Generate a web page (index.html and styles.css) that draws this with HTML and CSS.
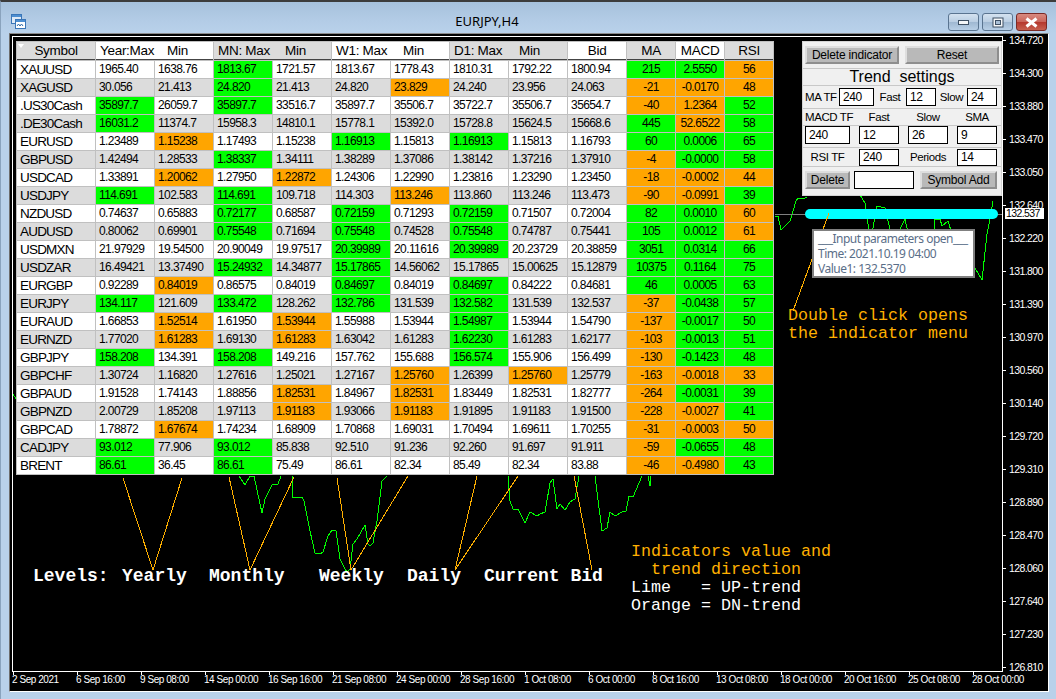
FILE: index.html
```html
<!DOCTYPE html>
<html lang="en">
<head>
<meta charset="utf-8">
<title>EURJPY,H4</title>
<link rel="stylesheet" href="styles.css">
</head>
<body>
<div class="window">
  <header class="titlebar">
    <svg class="appicon" width="15" height="15" viewBox="0 0 15 15"><rect x="0.5" y="0.5" width="10" height="9" fill="#dfeaf6" stroke="#3a76b8"/><rect x="1" y="1" width="9" height="2" fill="#4d8ed0"/><rect x="4.5" y="5.5" width="10" height="9" fill="#fff" stroke="#3a76b8"/><rect x="5" y="6" width="9" height="2" fill="#4d8ed0"/><path d="M6 12l1.5-2 1.5 2 1.5-2 1.5 2" fill="none" stroke="#2f6aa8"/></svg>
    <div class="title">EURJPY,H4</div>
    <div class="winbtns">
      <div class="winbtn"><svg width="12" height="7" viewBox="0 0 12 7"><rect x="0.5" y="1.5" width="10" height="4" fill="#f4f6f8" stroke="#3e5064"/></svg></div>
      <div class="winbtn"><svg width="12" height="11" viewBox="0 0 12 11"><rect x="1" y="1" width="10" height="9" fill="#f4f6f8" stroke="#3e5064"/><rect x="3.5" y="3.5" width="5" height="4" fill="#a9bfd6" stroke="#3e5064"/></svg></div>
      <div class="winbtn close"><svg width="15" height="11" viewBox="0 0 15 11"><path d="M2.5 1.5l10 8M12.5 1.5l-10 8" stroke="#fff" stroke-width="3"/></svg></div>
    </div>
  </header>
  <main class="chart">
    <div class="chart-body">
      <div class="plot">
        <svg class="lines" width="989" height="634" viewBox="13 36 989 634">
          <g class="green">
            <polyline points="13,393 16,398"/>
            <polyline points="239,475 245,484 250,475 254,475 262,512 265,498 272,484 278,483 281,475"/>
            <polyline points="292,475 293,497 302,496 304,500 310,530 315,552 320,553 323,551 328,535 332,529 336,530 340,558 345,568 347,571 350,568 353,543 357,538 365,524 368,543 370,545 373,542 377,520 382,480 387,475"/>
            <polyline points="508,475 510,500 513,508 518,508 525,522 530,511 537,515 540,513 545,511 550,482 553,478 557,508 560,503 565,509 570,501 575,498 579,475"/>
            <polyline points="595,475 602,530 607,527 610,511 615,515 622,511 626,510 629,495 633,496 642,475"/>
            <polyline points="648,475 650,485 651,475"/>
            <polyline points="775,215 778,215 781,229 790,220 796,200 798,197 803,198 807,196"/>
            <polyline points="860,194 865,202 868,223 870,233 873,227 877,205 885,207 890,228 900,228 905,218 908,232 933,240 935,218 940,218 942,225 948,220 952,233 975,267 982,279 987,233 990,218 993,200"/>
          </g>
          <line class="priceline" x1="775" y1="213" x2="1002" y2="213"/>
          <g class="orange">
            <polyline points="123,477 153,569 182,477"/>
            <polyline points="229,476 250,569 294,476"/>
            <polyline points="337,477 351,569 408,475"/>
            <polyline points="477,475 455,569 518,475"/>
            <line x1="574" y1="475" x2="592" y2="569"/>
          </g>
          <line class="cyan" x1="810" y1="213" x2="993" y2="213"/>
          <line class="orange-line" x1="829" y1="212" x2="793" y2="310"/>
        </svg>

        <table class="quotes">
          <colgroup><col class="c-sym"><col class="c-num" span="9"><col class="c-ind" span="3"></colgroup>
          <thead>
            <tr>
              <th class="gray center"><span class="sort"></span>Symbol</th>
              <th colspan="2"><span class="hmax">Year:Max</span>Min</th>
              <th colspan="2" class="gray"><span class="hmax">MN: Max</span>Min</th>
              <th colspan="2"><span class="hmax">W1: Max</span>Min</th>
              <th colspan="2" class="gray"><span class="hmax-d">D1: Max</span>Min</th>
              <th class="center">Bid</th>
              <th class="gray center">MA</th>
              <th class="center">MACD</th>
              <th class="gray center">RSI</th>
            </tr>
          </thead>
          <tbody>
<tr><td>XAUUSD</td><td>1965.40</td><td>1638.76</td><td class="g">1813.67</td><td>1721.57</td><td>1813.67</td><td>1778.43</td><td>1810.31</td><td>1792.22</td><td>1800.94</td><td class="g">215</td><td class="g">2.5550</td><td class="o">56</td></tr>
<tr><td>XAGUSD</td><td>30.056</td><td>21.413</td><td class="g">24.820</td><td>21.413</td><td>24.820</td><td class="o">23.829</td><td>24.240</td><td>23.956</td><td>24.063</td><td class="o">-21</td><td class="o">-0.0170</td><td class="o">48</td></tr>
<tr><td>.US30Cash</td><td class="g">35897.7</td><td>26059.7</td><td class="g">35897.7</td><td>33516.7</td><td>35897.7</td><td>35506.7</td><td>35722.7</td><td>35506.7</td><td>35654.7</td><td class="o">-40</td><td class="o">1.2364</td><td class="g">52</td></tr>
<tr><td>.DE30Cash</td><td class="g">16031.2</td><td>11374.7</td><td>15958.3</td><td>14810.1</td><td>15778.1</td><td>15392.0</td><td>15728.8</td><td>15624.5</td><td>15668.6</td><td class="g">445</td><td class="o">52.6522</td><td class="g">58</td></tr>
<tr><td>EURUSD</td><td>1.23489</td><td class="o">1.15238</td><td>1.17493</td><td>1.15238</td><td class="g">1.16913</td><td>1.15813</td><td class="g">1.16913</td><td>1.15813</td><td>1.16793</td><td class="g">60</td><td class="g">0.0006</td><td class="g">65</td></tr>
<tr><td>GBPUSD</td><td>1.42494</td><td>1.28533</td><td class="g">1.38337</td><td>1.34111</td><td>1.38289</td><td>1.37086</td><td>1.38142</td><td>1.37216</td><td>1.37910</td><td class="o">-4</td><td class="g">-0.0000</td><td class="g">58</td></tr>
<tr><td>USDCAD</td><td>1.33891</td><td class="o">1.20062</td><td>1.27950</td><td class="o">1.22872</td><td>1.24306</td><td>1.22990</td><td>1.23816</td><td>1.23290</td><td>1.23450</td><td class="o">-18</td><td class="o">-0.0002</td><td class="o">44</td></tr>
<tr><td>USDJPY</td><td class="g">114.691</td><td>102.583</td><td class="g">114.691</td><td>109.718</td><td>114.303</td><td class="o">113.246</td><td>113.860</td><td>113.246</td><td>113.473</td><td class="o">-90</td><td class="o">-0.0991</td><td class="g">39</td></tr>
<tr><td>NZDUSD</td><td>0.74637</td><td>0.65883</td><td class="g">0.72177</td><td>0.68587</td><td class="g">0.72159</td><td>0.71293</td><td class="g">0.72159</td><td>0.71507</td><td>0.72004</td><td class="g">82</td><td class="g">0.0010</td><td class="o">60</td></tr>
<tr><td>AUDUSD</td><td>0.80062</td><td>0.69901</td><td class="g">0.75548</td><td>0.71694</td><td class="g">0.75548</td><td>0.74528</td><td class="g">0.75548</td><td>0.74787</td><td>0.75441</td><td class="g">105</td><td class="g">0.0012</td><td class="o">61</td></tr>
<tr><td>USDMXN</td><td>21.97929</td><td>19.54500</td><td>20.90049</td><td>19.97517</td><td class="g">20.39989</td><td>20.11616</td><td class="g">20.39989</td><td>20.23729</td><td>20.38859</td><td class="g">3051</td><td class="g">0.0314</td><td class="g">66</td></tr>
<tr><td>USDZAR</td><td>16.49421</td><td>13.37490</td><td class="g">15.24932</td><td>14.34877</td><td class="g">15.17865</td><td>14.56062</td><td>15.17865</td><td>15.00625</td><td>15.12879</td><td class="g">10375</td><td class="g">0.1164</td><td class="g">75</td></tr>
<tr><td>EURGBP</td><td>0.92289</td><td class="o">0.84019</td><td>0.86575</td><td>0.84019</td><td class="g">0.84697</td><td>0.84019</td><td class="g">0.84697</td><td>0.84222</td><td>0.84681</td><td class="g">46</td><td class="g">0.0005</td><td class="g">63</td></tr>
<tr><td>EURJPY</td><td class="g">134.117</td><td>121.609</td><td class="g">133.472</td><td>128.262</td><td class="g">132.786</td><td>131.539</td><td class="g">132.582</td><td>131.539</td><td>132.537</td><td class="o">-37</td><td class="g">-0.0438</td><td class="g">57</td></tr>
<tr><td>EURAUD</td><td>1.66853</td><td class="o">1.52514</td><td>1.61950</td><td class="o">1.53944</td><td>1.55988</td><td>1.53944</td><td class="g">1.54987</td><td>1.53944</td><td>1.54790</td><td class="o">-137</td><td class="g">-0.0017</td><td class="g">50</td></tr>
<tr><td>EURNZD</td><td>1.77020</td><td class="o">1.61283</td><td>1.69130</td><td class="o">1.61283</td><td>1.63042</td><td>1.61283</td><td class="g">1.62230</td><td>1.61283</td><td>1.62177</td><td class="o">-103</td><td class="g">-0.0013</td><td class="g">51</td></tr>
<tr><td>GBPJPY</td><td class="g">158.208</td><td>134.391</td><td class="g">158.208</td><td>149.216</td><td>157.762</td><td>155.688</td><td class="g">156.574</td><td>155.906</td><td>156.499</td><td class="o">-130</td><td class="g">-0.1423</td><td class="g">48</td></tr>
<tr><td>GBPCHF</td><td>1.30724</td><td>1.16820</td><td>1.27616</td><td>1.25021</td><td>1.27167</td><td class="o">1.25760</td><td>1.26399</td><td class="o">1.25760</td><td>1.25779</td><td class="o">-163</td><td class="o">-0.0018</td><td class="o">33</td></tr>
<tr><td>GBPAUD</td><td>1.91528</td><td>1.74143</td><td>1.88856</td><td class="o">1.82531</td><td>1.84967</td><td class="o">1.82531</td><td>1.83449</td><td>1.82531</td><td>1.82777</td><td class="o">-264</td><td class="g">-0.0031</td><td class="g">39</td></tr>
<tr><td>GBPNZD</td><td>2.00729</td><td>1.85208</td><td>1.97113</td><td class="o">1.91183</td><td>1.93066</td><td class="o">1.91183</td><td>1.91895</td><td>1.91183</td><td>1.91500</td><td class="o">-228</td><td class="o">-0.0027</td><td class="g">41</td></tr>
<tr><td>GBPCAD</td><td>1.78872</td><td class="o">1.67674</td><td>1.74234</td><td>1.68909</td><td>1.70868</td><td>1.69031</td><td>1.70494</td><td>1.69611</td><td>1.70255</td><td class="o">-31</td><td class="o">-0.0003</td><td class="o">50</td></tr>
<tr><td>CADJPY</td><td class="g">93.012</td><td>77.906</td><td class="g">93.012</td><td>85.838</td><td>92.510</td><td>91.236</td><td>92.260</td><td>91.697</td><td>91.911</td><td class="o">-59</td><td class="g">-0.0655</td><td class="g">48</td></tr>
<tr><td>BRENT</td><td class="g">86.61</td><td>36.45</td><td class="g">86.61</td><td>75.49</td><td>86.61</td><td>82.34</td><td>85.49</td><td>82.34</td><td>83.88</td><td class="o">-46</td><td class="o">-0.4980</td><td class="g">43</td></tr>
          </tbody>
        </table>

        <aside class="panel">
          <div class="row row-top"><div class="btn w94">Delete indicator</div><div class="btn w94">Reset</div></div>
          <div class="panel-title">Trend&nbsp; settings</div>
          <div class="row row-ma"><span class="lbl w34">MA TF</span><div class="field w35">240</div><span class="lbl w32 c">Fast</span><div class="field w30">12</div><span class="lbl w31 c">Slow</span><div class="field w30">24</div></div>
          <div class="row row-heads"><span class="lbl w45">MACD TF</span><span class="lbl w40 c">Fast</span><span class="lbl w40 c">Slow</span><span class="lbl w40 c">SMA</span></div>
          <div class="row row-macd"><div class="field w45">240</div><div class="field w40">12</div><div class="field w40">26</div><div class="field w40">9</div></div>
          <div class="row row-rsi"><span class="lbl w45 c">RSI TF</span><div class="field w40">240</div><span class="lbl w40 c">Periods</span><div class="field w40">14</div></div>
          <div class="row row-bottom"><div class="btn w45">Delete</div><div class="field w60"></div><div class="btn w77">Symbol Add</div></div>
        </aside>

        <div class="tooltip">
          <div>___Input parameters open___</div>
          <div>Time: 2021.10.19 04:00</div>
          <div>Value1: 132.5370</div>
        </div>

        <div class="note amber note-dbl">Double click opens<br>the indicator menu</div>
        <div class="note amber note-ind">Indicators value and<br>&nbsp;&nbsp;trend direction</div>
        <div class="note note-leg">Lime&nbsp;&nbsp;&nbsp;= UP-trend<br>Orange = DN-trend</div>

        <div class="lvl lvl-1">Levels:</div>
        <div class="lvl lvl-2">Yearly</div>
        <div class="lvl lvl-3">Monthly</div>
        <div class="lvl lvl-4">Weekly</div>
        <div class="lvl lvl-5">Daily</div>
        <div class="lvl lvl-6">Current Bid</div>
      </div>
      <div class="yaxis">
        <div class="ytick">134.720</div><div class="ytick">134.300</div><div class="ytick">133.880</div><div class="ytick">133.470</div><div class="ytick">133.050</div><div class="ytick">132.640</div><div class="ytick">132.220</div><div class="ytick">131.800</div><div class="ytick">131.390</div><div class="ytick">130.970</div><div class="ytick">130.560</div><div class="ytick">130.140</div><div class="ytick">129.720</div><div class="ytick">129.310</div><div class="ytick">128.890</div><div class="ytick">128.470</div><div class="ytick">128.060</div><div class="ytick">127.640</div><div class="ytick">127.230</div><div class="ytick">126.810</div>
        <div class="pricetag">132.537</div>
      </div>
    </div>
    <div class="xaxis">
      <div class="xtick">2 Sep 2021</div><div class="xtick">6 Sep 16:00</div><div class="xtick">9 Sep 08:00</div><div class="xtick">14 Sep 00:00</div><div class="xtick">16 Sep 16:00</div><div class="xtick">21 Sep 08:00</div><div class="xtick">24 Sep 00:00</div><div class="xtick">28 Sep 16:00</div><div class="xtick">1 Oct 08:00</div><div class="xtick">6 Oct 00:00</div><div class="xtick">8 Oct 16:00</div><div class="xtick">13 Oct 08:00</div><div class="xtick">18 Oct 00:00</div><div class="xtick">20 Oct 16:00</div><div class="xtick">25 Oct 08:00</div><div class="xtick">28 Oct 00:00</div>
    </div>
  </main>
</div>
</body>
</html>
```

FILE: styles.css
```css
* { box-sizing: border-box; }
html, body { margin: 0; padding: 0; }
body {
  width: 1056px;
  height: 699px;
  overflow: hidden;
  background: #b9d1ea;
  font-family: "Liberation Sans", Arial, sans-serif;
}
.window {
  height: 699px;
  padding: 0 7px 7px 8px;
  display: flex;
  flex-direction: column;
  background: #b9d1ea;
  border-top: 2px solid #3c3c3c;
  border-left: 1px solid #8aa3bd;
}
.titlebar {
  height: 31px;
  margin: 0 -7px 0 -8px;
  padding: 11px 9px 0 10px;
  display: flex;
  align-items: flex-start;
  background: linear-gradient(#a6c1dc 0, #b3cce6 60%, #b9d1ea 100%);
}
.appicon { flex: none; margin-top: 1px; }
.title {
  flex: 1;
  padding-top: 0;
  text-align: center;
  font: 13px/17px "Noto Sans", sans-serif;
  color: #000;
}
.winbtns { display: flex; gap: 3px; }
.winbtn {
  width: 31px;
  height: 18px;
  display: flex;
  align-items: center;
  justify-content: center;
  border: 1px solid #5a7490;
  border-radius: 3px;
  background: linear-gradient(#d4e2f0 0, #b9cde2 50%, #9fb8d2 52%, #b8cfe6 100%);
}
.winbtn.close {
  border-color: #7a2a26;
  background: linear-gradient(#d88a80 0, #c9645a 50%, #b5382e 52%, #c6604f 100%);
}
.chart {
  flex: 1;
  display: flex;
  flex-direction: column;
  padding: 2px 0 0 2px;
  background: #000;
  border-left: 1px solid #6e6e6e;
  border-top: 1px solid #8a8a8a;
  border-right: 1px solid #fff;
  border-bottom: 1px solid #fff;
  min-height: 0;
}
.chart-body { display: flex; height: 636px; }
.plot {
  position: relative;
  width: 991px;
  height: 636px;
  border: 1px solid #fff;
  flex: none;
}
.lines { position: absolute; left: 0; top: 0; }
.green polyline { fill: none; stroke: #00ff00; stroke-width: 1; shape-rendering: crispEdges; }
.orange polyline, .orange line, .orange-line { fill: none; stroke: #ffb000; stroke-width: 1; shape-rendering: crispEdges; }
.priceline { stroke: #808080; stroke-width: 1; shape-rendering: crispEdges; }
.cyan { stroke: #00ffff; stroke-width: 10; stroke-linecap: round; }

/* quotes table */
.quotes {
  position: absolute;
  left: 3px;
  top: 4px;
  width: 758px;
  table-layout: fixed;
  border-collapse: separate;
  border-spacing: 1px;
  background: #c0c0c0;
  color: #000;
}
.c-sym { width: 78px; }
.c-num { width: 58px; }
.c-ind { width: 48px; }
.quotes th {
  height: 18px;
  padding: 0 0 0 4px;
  background: #fff;
  border-bottom: 1px solid #444;
  font-weight: normal;
  font-size: 13.5px;
  line-height: 17px;
  letter-spacing: -0.3px;
  text-align: left;
  white-space: nowrap;
}
.quotes th.gray { background: #dcdcdc; }
.quotes th.center { text-align: center; padding: 0; position: relative; }
.sort {
  position: absolute;
  left: 1px;
  top: 2px;
  width: 0;
  height: 0;
  border-left: 3px solid transparent;
  border-right: 3px solid transparent;
  border-top: 4px solid #fff;
}
.hmax, .hmax-d { display: inline-block; width: 67px; }
.hmax-d { width: 65px; }
.quotes td {
  height: 17px;
  padding: 0 0 0 3px;
  font-size: 12px;
  line-height: 17px;
  letter-spacing: -0.6px;
  white-space: nowrap;
  overflow: hidden;
  background: #fff;
}
.quotes tbody tr:nth-child(even) td { background: #dcdcdc; }
.quotes tbody td:first-child { font-size: 13.5px; letter-spacing: -0.8px; }
.quotes tbody td:nth-child(n+11) { text-align: center; padding: 0; }
.quotes tbody tr td.g { background: #00ff00; }
.quotes tbody tr td.o { background: #ffa500; }

/* settings panel */
.panel {
  position: absolute;
  left: 789px;
  top: 4px;
  width: 200px;
  height: 155px;
  background: #f0f0f0;
  border: 1px solid #d4d4d4;
  font-size: 12px;
  color: #000;
}
.row { display: flex; align-items: center; justify-content: space-between; }
.row-top { height: 27px; padding: 4px 2px 0 2px; align-items: flex-start; border-bottom: 1px solid #c8c8c8; }
.panel-title {
  height: 17px;
  font-size: 16px;
  line-height: 16px;
  text-align: center;
  border-bottom: 1px solid #c8c8c8;
}
.row-ma { height: 23px; padding: 0 4px 0 2px; border-bottom: 1px solid #c8c8c8; justify-content: flex-start; }
.row-heads { height: 17px; padding: 0 4px 0 2px; border-bottom: 1px solid #c8c8c8; }
.row-macd { height: 22px; padding: 0 4px 0 2px; align-items: flex-start; border-bottom: 1px solid #c8c8c8; }
.row-rsi { height: 19px; padding: 0 4px 0 2px; border-bottom: 1px solid #c8c8c8; }
.row-bottom { height: 25px; padding: 0 4px 0 2px; justify-content: flex-start; gap: 4px; }
.row-bottom .btn:last-child { margin-left: 2px; }
.lbl { letter-spacing: -0.4px; white-space: nowrap; font-size: 11.5px; }
.c { text-align: center; }
.btn {
  height: 18px;
  line-height: 14px;
  text-align: center;
  background: #b9b9b9;
  border: 2px solid;
  border-color: #dedede #8e8e8e #8e8e8e #dedede;
  letter-spacing: -0.2px;
  white-space: nowrap;
}
.field {
  height: 18px;
  padding-left: 3px;
  line-height: 16px;
  background: #fff;
  border: 1px solid #000;
  letter-spacing: -0.4px;
}
.row-rsi .field { height: 17px; line-height: 15px; }
.w94 { width: 94px; }
.w77 { width: 77px; }
.w60 { width: 60px; }
.w45 { width: 45px; }
.w40 { width: 40px; }
.w35 { width: 35px; }
.w34 { width: 34px; }
.w32 { width: 32px; }
.w31 { width: 31px; }
.w30 { width: 30px; }

/* tooltip */
.tooltip {
  position: absolute;
  left: 799px;
  top: 192px;
  width: 163px;
  height: 49px;
  padding: 0 0 0 4px;
  background: #fff;
  border: 2px solid #808080;
  font: 12px/15px "Noto Sans", sans-serif;
  letter-spacing: -0.5px;
  color: #5a6e88;
  white-space: nowrap;
}

/* free canvas notes */
.note {
  position: absolute;
  font: 16.67px/18px "Liberation Mono", monospace;
  color: #fff;
  white-space: nowrap;
}
.amber { color: #ffb000; }
.note-dbl { left: 775px; top: 270px; }
.note-ind { left: 618px; top: 506px; }
.note-leg { left: 618px; top: 542px; }
.lvl {
  position: absolute;
  top: 529px;
  font: bold 18px/20px "Liberation Mono", monospace;
  color: #fff;
  white-space: nowrap;
}
.lvl-1 { left: 20px; }
.lvl-2 { left: 109px; }
.lvl-3 { left: 196px; }
.lvl-4 { left: 306px; }
.lvl-5 { left: 394px; }
.lvl-6 { left: 471px; }

/* axes */
.yaxis {
  position: relative;
  flex: 1;
  color: #fff;
  font-size: 10.5px;
  letter-spacing: -0.6px;
}
.ytick {
  position: relative;
  height: 33px;
  padding: 0 0 0 6px;
  line-height: 12px;
  top: -2px;
  white-space: nowrap;
}
.ytick::before {
  content: "";
  position: absolute;
  left: 0;
  top: 6px;
  width: 3px;
  height: 1px;
  background: #fff;
}
.pricetag {
  position: absolute;
  left: 2px;
  top: 172px;
  width: 39px;
  height: 11px;
  background: #fff;
  color: #000;
  line-height: 11px;
  padding-left: 1px;
}
.xaxis { display: flex; flex: 1; padding-left: 1px; color: #fff; font-size: 10px; letter-spacing: -0.45px; }
.xtick {
  position: relative;
  flex: none;
  width: 64px;
  padding: 2px 0 0 0;
  line-height: 12px;
  white-space: nowrap;
  left: -1px;
}
.xtick::before {
  content: "";
  position: absolute;
  left: 1px;
  top: 0;
  width: 1px;
  height: 3px;
  background: #fff;
}
```
